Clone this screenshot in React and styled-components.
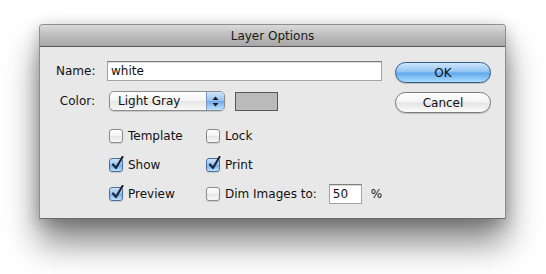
import React from "react";
import styled, { createGlobalStyle } from "styled-components";

const GlobalStyle = createGlobalStyle`
  html, body {
    margin: 0;
    padding: 0;
    background: #ffffff;
  }
  body {
    font-family: "DejaVu Sans", "Liberation Sans", sans-serif;
    font-size: 12px;
    color: #111;
  }
`;

const Page = styled.div`
  width: 546px;
  height: 274px;
  padding: 24px 0 0 39px;
  box-sizing: border-box;
  overflow: hidden;
`;

const Window = styled.div`
  width: 467px;
  height: 195px;
  box-sizing: border-box;
  display: flex;
  flex-direction: column;
  background: #e8e8e8;
  border: 1px solid #8e8e8e;
  border-bottom-color: #6a6a6a;
  border-radius: 4px 4px 0 0;
  box-shadow: 0 24px 34px rgba(0, 0, 0, 0.48), 0 4px 16px rgba(0, 0, 0, 0.24);
`;

const TitleBar = styled.div`
  height: 22px;
  flex-shrink: 0;
  display: flex;
  align-items: center;
  justify-content: center;
  border-radius: 3px 3px 0 0;
  background: linear-gradient(#dadada, #bdbdbd 50%, #a7a7a7);
  border-bottom: 1px solid #555;
  color: #1a1a1a;
  font-size: 12px;
  padding-top: 1px;
  box-sizing: border-box;
`;

const Body = styled.div`
  flex: 1;
  display: flex;
  justify-content: space-between;
  padding: 14px 14px 0 16px;
`;

const Form = styled.div`
  display: flex;
  flex-direction: column;
`;

const FieldRow = styled.div`
  display: flex;
  align-items: center;
  height: 20px;
  margin-bottom: ${({ $gap }) => $gap || 0}px;
`;

const Label = styled.label`
  width: 39px;
  text-align: right;
  margin-right: ${({ $space }) => $space}px;
  white-space: nowrap;
`;

const TextField = styled.div`
  width: ${({ $w }) => $w}px;
  height: 20px;
  box-sizing: border-box;
  background: #fff;
  border: 1px solid #a3a3a3;
  border-top-color: #7e7e7e;
  box-shadow: inset 0 1px 0 #d8d8d8;
  padding: 0 3px;
  display: flex;
  align-items: center;
  font-size: 12px;
`;

const Popup = styled.div`
  width: 116px;
  height: 20px;
  box-sizing: border-box;
  display: flex;
  border: 1px solid #8c8c8c;
  border-radius: 5px;
  overflow: hidden;
  background: linear-gradient(#ffffff, #f3f3f3 50%, #e6e6e6 51%, #f8f8f8);
  box-shadow: 0 1px 1px rgba(0, 0, 0, 0.15);
`;

const PopupText = styled.span`
  flex: 1;
  padding-left: 8px;
  display: flex;
  align-items: center;
`;

const PopupArrows = styled.span`
  width: 17px;
  border-left: 1px solid #7a97bd;
  background: linear-gradient(#d3e6fb, #90bff0 50%, #6eaaea 51%, #bfe0ff);
  display: flex;
  align-items: center;
  justify-content: center;
`;

const Swatch = styled.div`
  width: 43px;
  height: 19px;
  box-sizing: border-box;
  margin-left: 10px;
  background: #bababa;
  border: 1px solid #575757;
`;

const CheckGrid = styled.div`
  display: grid;
  grid-template-columns: 97px auto;
  grid-auto-rows: 20px;
  row-gap: 9px;
  margin: 15px 0 0 53px;
`;

const CheckItem = styled.div`
  display: flex;
  align-items: center;
  white-space: nowrap;
`;

const Box = styled.span`
  width: 14px;
  height: 14px;
  box-sizing: border-box;
  border-radius: 3px;
  margin-right: 5px;
  position: relative;
  flex-shrink: 0;
  border: 1px solid ${({ $on }) => ($on ? "#4a6f9c" : "#8a8a8a")};
  background: ${({ $on }) =>
    $on
      ? "linear-gradient(#cfe4fb, #93c1f1 50%, #72acec 51%, #bde0ff)"
      : "linear-gradient(#ffffff, #f2f2f2 50%, #e4e4e4 51%, #fafafa)"};
  box-shadow: 0 1px 1px rgba(0, 0, 0, 0.12);

  svg {
    position: absolute;
    left: 1px;
    top: -3px;
  }
`;

const SmallField = styled(TextField)`
  margin-left: 12px;
  height: 20px;
`;

const Percent = styled.span`
  margin-left: 9px;
`;

const Buttons = styled.div`
  display: flex;
  flex-direction: column;
  gap: 9px;
  padding-top: 1px;
`;

const Button = styled.button`
  width: 96px;
  height: 21px;
  border-radius: 11px;
  font-family: inherit;
  font-size: 12px;
  color: #111;
  padding: 0;
  cursor: default;
  border: 1px solid ${({ $primary }) => ($primary ? "#2f5a8c" : "#7b7b7b")};
  background: ${({ $primary }) =>
    $primary
      ? "linear-gradient(#cfe6fc, #8fc3f3 48%, #5fa7ec 52%, #a9dcff)"
      : "linear-gradient(#ffffff, #f4f4f4 48%, #e4e4e4 52%, #fbfbfb)"};
  box-shadow: 0 1px 1px rgba(0, 0, 0, 0.18);
`;

const Check = () => (
  <svg width="13" height="14" viewBox="0 0 13 14">
    <path
      d="M2 8.5 L5 12 L11.5 1"
      fill="none"
      stroke="#1b2738"
      strokeWidth="2.2"
      strokeLinecap="round"
      strokeLinejoin="round"
    />
  </svg>
);

const Arrows = () => (
  <svg width="7" height="11" viewBox="0 0 7 11">
    <path d="M3.5 0.5 L6.5 4 L0.5 4 Z" fill="#1c1c1c" />
    <path d="M3.5 10.5 L6.5 7 L0.5 7 Z" fill="#1c1c1c" />
  </svg>
);

const CheckBox = ({ checked, children }) => (
  <CheckItem>
    <Box $on={checked}>{checked && <Check />}</Box>
    {children}
  </CheckItem>
);

export default function App() {
  return (
    <>
      <GlobalStyle />
      <Page>
        <Window>
          <TitleBar>Layer Options</TitleBar>
          <Body>
            <Form>
              <FieldRow $gap={10}>
                <Label $space={12}>Name:</Label>
                <TextField $w={275}>white</TextField>
              </FieldRow>
              <FieldRow>
                <Label $space={14}>Color:</Label>
                <Popup>
                  <PopupText>Light Gray</PopupText>
                  <PopupArrows>
                    <Arrows />
                  </PopupArrows>
                </Popup>
                <Swatch />
              </FieldRow>
              <CheckGrid>
                <CheckBox>Template</CheckBox>
                <CheckBox>Lock</CheckBox>
                <CheckBox checked>Show</CheckBox>
                <CheckBox checked>Print</CheckBox>
                <CheckBox checked>Preview</CheckBox>
                <CheckItem>
                  <Box />
                  Dim Images to:
                  <SmallField $w={33}>50</SmallField>
                  <Percent>%</Percent>
                </CheckItem>
              </CheckGrid>
            </Form>
            <Buttons>
              <Button $primary>OK</Button>
              <Button>Cancel</Button>
            </Buttons>
          </Body>
        </Window>
      </Page>
    </>
  );
}
